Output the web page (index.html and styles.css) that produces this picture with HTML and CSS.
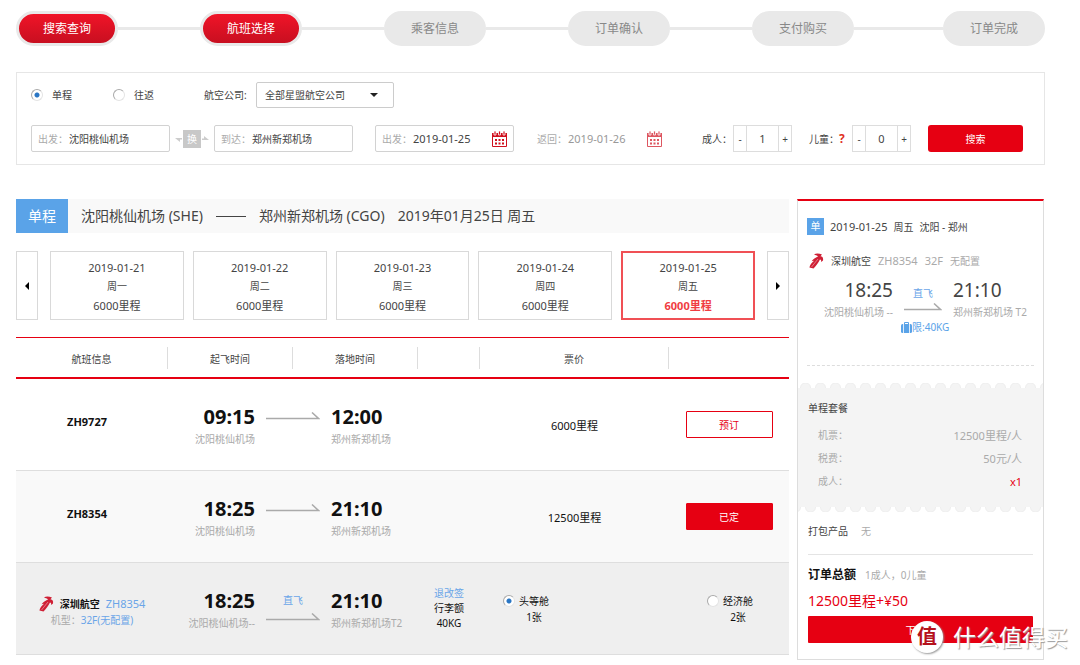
FILE: index.html
```html
<!DOCTYPE html>
<html lang="zh-CN">
<head>
<meta charset="utf-8">
<title>航班选择</title>
<link rel="stylesheet" href="styles.css">
</head>
<body>
<svg class="defs" aria-hidden="true">
  <symbol id="calendar" viewBox="0 0 15 16">
    <path d="M0 2h15v4H0z"/>
    <path d="M2 0h2v4H2zM6.500 0h2v4h-2zM11 0h2v4h-2z" stroke="#fff" stroke-width=".8"/>
    <path d="M.5 6v9.500h14V6" fill="none" stroke="currentColor"/>
    <path d="M3 8h2v2H3zM6.500 8h2v2h-2zM10 8h2v2h-2zM3 11.500h2v2H3zM6.500 11.500h2v2h-2zM10 11.500h2v2h-2z"/>
  </symbol>
  <symbol id="phoenix" viewBox="0 0 15 16">
    <path d="M5 1.500C7 .2 10 .3 13 1.600L11.500 3.200C13.500 3.400 14.500 4.800 14 7.500L12.200 9 12 6.800 10.800 6.800C9.500 9.500 7 13 4.500 15.600L.4 14.500C1 12 2.800 9.500 5 7.800L2.600 8.200C4.500 5.800 7 4.500 9.200 3.300 7.800 2.400 6.500 2.200 5 1.500z"/>
    <path d="M2.500 14 9 6" fill="none" stroke="#fff" stroke-width=".4"/>
  </symbol>
  <symbol id="arrow" viewBox="0 0 54 8" preserveAspectRatio="xMaxYMid slice">
    <path d="M0 6.500H52.500L46 .5" fill="none" stroke="#aaa" stroke-width="1.500"/>
  </symbol>
</svg>

<main class="page">
  <ol class="steps">
    <li class="step step-done">搜索查询</li>
    <li class="link"></li>
    <li class="step step-done">航班选择</li>
    <li class="link"></li>
    <li class="step">乘客信息</li>
    <li class="link"></li>
    <li class="step">订单确认</li>
    <li class="link"></li>
    <li class="step">支付购买</li>
    <li class="link link-last"></li>
    <li class="step">订单完成</li>
  </ol>

  <form class="search">
    <div class="search-row">
      <label class="trip"><input class="radio" type="radio" name="trip" checked>单程</label>
      <label class="trip"><input class="radio" type="radio" name="trip">往返</label>
      <label class="airline-label" for="airline">航空公司:</label>
      <span class="select-box"><select class="select" id="airline"><option>全部星盟航空公司</option></select></span>
    </div>
    <div class="search-row">
      <label class="field"><span class="hint">出发：</span><input class="field-input" type="text" value="沈阳桃仙机场"></label>
      <span class="swap">
        <svg width="7" height="6" viewBox="0 0 7 6"><path d="M0 2h7v1.500H5V6z" fill="#ccc"/></svg>
        <button class="swap-button" type="button">换</button>
        <svg width="7" height="6" viewBox="0 0 7 6"><path d="M0 2.500h2V0l5 4H0z" fill="#ccc"/></svg>
      </span>
      <label class="field"><span class="hint">到达：</span><input class="field-input" type="text" value="郑州新郑机场"></label>
      <label class="field field-date"><span class="hint">出发：</span><input class="field-input latin" type="text" value="2019-01-25"><svg class="calendar" width="15" height="16"><use href="#calendar"/></svg></label>
      <label class="field field-return"><span class="hint">返回：</span><input class="field-input latin" type="text" value="2019-01-26"><svg class="calendar" width="15" height="16"><use href="#calendar"/></svg></label>
      <label class="count-label" for="adults">成人：</label>
      <span class="stepper"><button class="stepper-button" type="button">-</button><input class="stepper-input" id="adults" type="text" value="1"><button class="stepper-button" type="button">+</button></span>
      <label class="count-label count-child" for="children">儿童：<b class="help">?</b></label>
      <span class="stepper"><button class="stepper-button" type="button">-</button><input class="stepper-input" id="children" type="text" value="0"><button class="stepper-button" type="button">+</button></span>
      <button class="search-button" type="submit">搜索</button>
    </div>
  </form>

  <div class="columns">
    <section class="results">
      <h1 class="route">
        <span class="route-tag">单程</span>
        <span>沈阳桃仙机场 (SHE)</span>
        <span class="route-dash"></span>
        <span>郑州新郑机场 (CGO)</span>
        <span>2019年01月25日 周五</span>
      </h1>

      <div class="dates">
        <button class="page-button" type="button" aria-label="前一天"><svg width="4" height="8"><path d="M4 0v8L0 4z"/></svg></button>
        <div class="date-list">
          <button class="date" type="button"><span>2019-01-21</span><span class="weekday">周一</span><span>6000里程</span></button>
          <button class="date" type="button"><span>2019-01-22</span><span class="weekday">周二</span><span>6000里程</span></button>
          <button class="date" type="button"><span>2019-01-23</span><span class="weekday">周三</span><span>6000里程</span></button>
          <button class="date" type="button"><span>2019-01-24</span><span class="weekday">周四</span><span>6000里程</span></button>
          <button class="date date-active" type="button"><span>2019-01-25</span><span class="weekday">周五</span><span class="date-price">6000里程</span></button>
        </div>
        <button class="page-button" type="button" aria-label="后一天"><svg width="4" height="8"><path d="M0 0v8l4-4z"/></svg></button>
      </div>

      <table class="flights">
        <colgroup><col class="col-info"><col class="col-time"><col class="col-time"><col class="col-rule"><col class="col-price"><col class="col-action"></colgroup>
        <thead>
          <tr><th><div class="head">航班信息</div></th><th><div class="head">起飞时间</div></th><th><div class="head">落地时间</div></th><th><div class="head"></div></th><th><div class="head">票价</div></th><th></th></tr>
        </thead>
        <tbody>
          <tr class="flight">
            <td class="code">ZH9727</td>
            <td colspan="2"><div class="leg">
              <div class="leg-from"><b class="time">09:15</b><span class="airport">沈阳桃仙机场</span></div>
              <div class="leg-way"><svg width="54" height="8"><use href="#arrow"/></svg></div>
              <div class="leg-to"><b class="time">12:00</b><span class="airport">郑州新郑机场</span></div>
            </div></td>
            <td></td>
            <td class="price">6000里程</td>
            <td><button class="book" type="button">预订</button></td>
          </tr>
          <tr class="flight flight-open">
            <td class="code">ZH8354</td>
            <td colspan="2"><div class="leg">
              <div class="leg-from"><b class="time">18:25</b><span class="airport">沈阳桃仙机场</span></div>
              <div class="leg-way"><svg width="54" height="8"><use href="#arrow"/></svg></div>
              <div class="leg-to"><b class="time">21:10</b><span class="airport">郑州新郑机场</span></div>
            </div></td>
            <td></td>
            <td class="price">12500里程</td>
            <td><button class="book book-done" type="button">已定</button></td>
          </tr>
          <tr class="flight flight-detail">
            <td><div class="carrier">
              <span class="carrier-line"><svg class="phoenix" width="15" height="16"><use href="#phoenix"/></svg><b>深圳航空</b><a class="blue latin" href="#">ZH8354</a></span>
              <span class="hint">机型：<a class="blue" href="#">32F(无配置)</a></span>
            </div></td>
            <td colspan="2"><div class="leg">
              <div class="leg-from"><b class="time">18:25</b><span class="airport">沈阳桃仙机场--</span></div>
              <div class="leg-way leg-direct"><span class="blue">直飞</span><svg width="54" height="8"><use href="#arrow"/></svg></div>
              <div class="leg-to"><b class="time">21:10</b><span class="airport">郑州新郑机场T2</span></div>
            </div></td>
            <td class="rules"><a class="blue" href="#">退改签</a><br>行李额<br>40KG</td>
            <td colspan="2"><div class="cabins">
              <label class="cabin"><input class="radio" type="radio" name="cabin" checked><span>头等舱<br>1张</span></label>
              <label class="cabin"><input class="radio" type="radio" name="cabin"><span>经济舱<br>2张</span></label>
            </div></td>
          </tr>
        </tbody>
      </table>
    </section>

    <aside class="order">
      <div class="trip-card">
        <div class="trip-title"><span class="badge">单</span><span class="latin">2019-01-25</span><span>周五</span><span>沈阳 - 郑州</span></div>
        <div class="trip-carrier"><svg class="phoenix" width="15" height="16"><use href="#phoenix"/></svg><span class="carrier-name">深圳航空</span><span class="latin">ZH8354</span><span class="latin">32F</span><span>无配置</span></div>
        <div class="leg trip-leg">
          <div class="leg-from"><span class="trip-time">18:25</span><span class="airport">沈阳桃仙机场 --</span></div>
          <div class="trip-way"><span class="blue">直飞</span><svg width="38" height="8"><use href="#arrow"/></svg></div>
          <div class="leg-to"><span class="trip-time">21:10</span><span class="airport">郑州新郑机场 T2</span></div>
        </div>
        <div class="luggage">
          <svg width="11" height="11" viewBox="0 0 11 11"><path d="M3.500 2V.5h4V2" fill="none" stroke="#5aa3e8"/><rect y="2" width="11" height="9" rx="1.500" fill="#5aa3e8"/><path d="M2.500 2v9M8.500 2v9" stroke="#fff" stroke-width=".8"/></svg>限:40KG
        </div>
      </div>
      <div class="fare">
        <h2 class="subtitle">单程套餐</h2>
        <dl class="fare-list">
          <div class="fare-row"><dt>机票：</dt><dd class="latin">12500里程/人</dd></div>
          <div class="fare-row"><dt>税费：</dt><dd class="latin">50元/人</dd></div>
          <div class="fare-row"><dt>成人：</dt><dd class="red latin">x1</dd></div>
        </dl>
      </div>
      <div class="summary">
        <div class="extras"><h2 class="subtitle">打包产品</h2><span>无</span></div>
        <div class="total"><h2 class="total-title">订单总额</h2><span>1成人，0儿童</span></div>
        <p class="total-price">12500里程+¥50</p>
        <button class="next" type="button">下一步</button>
      </div>
    </aside>
  </div>
  <div class="watermark"><span class="watermark-mark">值</span><span>什么值得买</span></div>
</main>
</body>
</html>
```
FILE: styles.css
```css
* { box-sizing: border-box; }

body {
  margin: 0;
  background: #fff;
  color: #444;
  font: 10px/16px "Noto Sans", "Noto Sans CJK SC", sans-serif;
}

button, input, select { font: inherit; color: inherit; margin: 0; padding: 0; }
button { cursor: pointer; }
a { color: inherit; text-decoration: none; }
svg { display: block; flex: none; fill: currentColor; }
h1, h2, p, dl, dd, ol { margin: 0; padding: 0; }

.defs { position: absolute; width: 0; height: 0; }
.page { position: relative; padding: 11px 35px 5px 16px; }
.latin { font-size: 11px; }
.blue { color: #6aa5e8; }
.red { color: #e60012; }
.hint { color: #aaa; white-space: nowrap; }

/* Progress */
.steps { display: flex; align-items: center; list-style: none; }
.step {
  width: 102px;
  border: 3px solid #e9e9e9;
  border-radius: 18px;
  background: #e9e9e9;
  color: #888;
  font-size: 12px;
  line-height: 29px;
  text-align: center;
}
.step-done { background: linear-gradient(#f01428, #c80f20); color: #fff; }
.link { flex: 82 1 0; height: 3px; background: #e9e9e9; }
.link-last { flex-grow: 89; }

/* Search form */
.search {
  display: flex;
  flex-direction: column;
  gap: 17px;
  margin-top: 26px;
  padding: 9px 14px 12px;
  border: 1px solid #e6e6e6;
}
.search-row { display: flex; align-items: center; }
.trip { display: flex; align-items: center; gap: 9px; width: 82px; }
.radio {
  appearance: none;
  flex: none;
  width: 12px;
  height: 12px;
  border: 1px solid;
  border-color: #aaa #e4e4e4 #e4e4e4 #aaa;
  border-radius: 50%;
  background: #fff;
}
.radio:checked { background: radial-gradient(circle, #2a76c4 2px, #fff 3px); }
.airline-label { width: 61px; padding-left: 9px; white-space: nowrap; }
.select-box { position: relative; }
.select-box::after {
  content: "";
  position: absolute;
  top: 11px;
  right: 16px;
  border: 4px solid transparent;
  border-top-color: #222;
  pointer-events: none;
}
.select {
  appearance: none;
  width: 138px;
  height: 26px;
  padding-left: 8px;
  border: 1px solid #ccc;
  border-radius: 2px;
  background: #fff;
}
.field {
  display: flex;
  align-items: center;
  gap: 1px;
  width: 139px;
  height: 27px;
  padding: 0 6px;
  border: 1px solid #d2d2d2;
  border-radius: 2px;
}
.field-input { flex: 1; min-width: 0; border: 0; background: none; outline: 0; }
.field-date { margin-left: 22px; }
.calendar { color: #d0101e; }
.field-return { margin-left: 16px; border-color: transparent; color: #999; }
.field-return .calendar { opacity: .7; }
.swap { display: flex; align-items: center; justify-content: center; width: 44px; gap: 1px; }
.swap-button { width: 18px; height: 18px; border: 0; background: #c8c8c8; color: #fff; }
.count-label { width: 31px; margin-left: 33px; white-space: nowrap; }
.count-child { width: 43px; margin-left: 17px; }
.help { color: #e0301e; font-size: 12px; }
.stepper { display: flex; width: 59px; height: 27px; border: 1px solid #ddd; }
.stepper-button { flex: none; width: 12px; border: 0; background: #fff; }
.stepper-input {
  flex: 1;
  min-width: 0;
  border: 0;
  border-left: 1px solid #ddd;
  border-right: 1px solid #ddd;
  font-size: 11px;
  text-align: center;
}
.search-button {
  width: 95px;
  height: 27px;
  margin-left: 17px;
  border: 0;
  border-radius: 3px;
  background: #e60012;
  color: #fff;
}

/* Results */
.columns { display: flex; align-items: flex-start; gap: 8px; margin: 34px 1px 0 0; }
.results { flex: 1; min-width: 0; }
.route {
  display: flex;
  align-items: center;
  gap: 13px;
  background: #f9f9f9;
  font-size: 14px;
  font-weight: 400;
  line-height: 34px;
}
.route-tag { width: 52px; background: #5aa3e8; color: #fff; line-height: 34px; text-align: center; }
.route-dash { width: 30px; height: 1px; background: #444; }
.dates { display: flex; gap: 12px; margin-top: 18px; }
.date-list { flex: 1; display: grid; grid-template-columns: repeat(5, 1fr); gap: 9px; }
.page-button {
  display: flex;
  align-items: center;
  justify-content: center;
  width: 22px;
  border: 1px solid #d9d9d9;
  background: #fff;
  color: #000;
}
.date {
  display: flex;
  flex-direction: column;
  align-items: center;
  justify-content: center;
  height: 69px;
  padding-top: 2px;
  border: 1px solid #d9d9d9;
  background: #fff;
  font-size: 11px;
  line-height: 19px;
}
.weekday { font-size: 10px; }
.date-active { border: 2px solid #f05055; }
.date-price { color: #f03c41; font-weight: 700; }

.flights {
  width: 100%;
  margin-top: 17px;
  border-collapse: separate;
  border-spacing: 0;
  table-layout: fixed;
  color: #111;
}
.flights th, .flights td { padding: 0; text-align: center; }
.flights th {
  height: 42px;
  border-top: 1px solid #e60012;
  border-bottom: 2px solid #e60012;
  color: #444;
  font-weight: 400;
}
.col-info { width: 152px; }
.col-time { width: 125px; }
.col-rule { width: 62px; }
.col-action { width: 120px; }
.head { height: 22px; border-right: 1px solid #ddd; line-height: 24px; }
.flight td { height: 92px; border-bottom: 1px solid #dedede; }
.flight-open { background: #f9f9f9; }
.flight-detail { background: #efefef; }
.flight .code { padding: 0 10px 6px 0; font-size: 11px; font-weight: 700; }
.flight .price { padding-top: 2px; font-size: 11px; }
.leg { display: flex; gap: 11px; }
.flight .leg { padding-top: 3px; }
.leg-from, .leg-to { display: flex; flex-direction: column; white-space: nowrap; }
.leg-from { width: 87px; align-items: flex-end; }
.leg-to { align-items: flex-start; }
.leg-way { padding-top: 8px; }
.leg-direct { display: flex; flex-direction: column; align-items: center; gap: 5px; padding-top: 4px; }
.time { font-size: 20px; line-height: 26px; }
.airport { color: #aaa; line-height: 18px; }
.book {
  width: 87px;
  height: 27px;
  border: 1px solid #e60012;
  border-radius: 1px;
  background: #fff;
  color: #e60012;
}
.book-done { background: #e60012; color: #fff; }
.carrier { display: flex; flex-direction: column; align-items: center; padding-top: 6px; }
.carrier-line { display: flex; align-items: center; gap: 6px; }
.phoenix { color: #cf2035; }
.flight .rules { line-height: 15px; }
.cabins { display: flex; justify-content: space-between; padding: 0 36px 0 23px; }
.cabin { display: flex; align-items: flex-start; gap: 4px; }
.cabin .radio { margin-top: 2px; }

/* Order summary */
.order { width: 247px; border: 1px solid #ddd; border-top: 2px solid #e60012; }
.trip-card { margin: 0 9px; padding: 17px 0 32px; border-bottom: 1px dashed #ddd; }
.trip-title { display: flex; align-items: center; gap: 6px; }
.badge { width: 17px; background: #5aa3e8; color: #fff; line-height: 17px; text-align: center; }
.trip-carrier { display: flex; align-items: center; gap: 7px; margin: 18px 0 8px 2px; color: #aaa; }
.carrier-name { color: #444; }
.trip-leg .leg-from { width: 86px; }
.trip-time { color: #444; font-size: 19px; line-height: 26px; }
.trip-way { display: flex; flex-direction: column; align-items: center; gap: 2px; padding-top: 8px; }
.luggage { display: flex; align-items: center; margin-left: 94px; color: #5aa3e8; line-height: 12px; }
.fare { position: relative; margin-top: 22px; padding: 12px 10px 14px; background: #f4f4f4; }
.fare::before, .fare::after {
  content: "";
  position: absolute;
  left: 0;
  right: 0;
  height: 5px;
}
.fare::before { top: -5px; background: radial-gradient(circle at 50% 100%, #f4f4f4 4px, #eee 5px, transparent 6px) 0 0 / 15px 5px repeat-x; }
.fare::after { bottom: -5px; background: radial-gradient(circle at 50% 0, #f4f4f4 4px, #eee 5px, transparent 6px) 5px 0 / 15px 5px repeat-x; }
.subtitle { color: #444; font-size: 10px; font-weight: 400; }
.fare-list { margin-top: 8px; color: #aaa; }
.fare-row { display: flex; justify-content: space-between; padding: 0 11px 0 10px; line-height: 23px; }
.summary { padding: 16px 10px; color: #aaa; }
.extras { display: flex; gap: 13px; padding-bottom: 15px; border-bottom: 1px solid #e4e4e4; }
.total { display: flex; align-items: center; gap: 9px; margin-top: 12px; }
.total-title { color: #111; font-size: 12px; }
.total-price { margin: 8px 0 5px; color: #e60012; font-size: 14px; line-height: 20px; }
.next { width: 100%; height: 27px; border: 0; border-radius: 1px; background: #e60012; color: #fff; }

.watermark {
  position: absolute;
  right: 12px;
  bottom: 12px;
  display: flex;
  align-items: center;
  gap: 10px;
  color: #fff;
  font-size: 23px;
  line-height: 32px;
  white-space: nowrap;
  text-shadow: 1px 1px 1px #999;
}
.watermark-mark {
  width: 32px;
  border-radius: 50%;
  background: #fff;
  box-shadow: 1px 1px 2px #999;
  color: #b5121c;
  font-size: 20px;
  font-weight: 700;
  text-align: center;
  text-shadow: none;
}
```
